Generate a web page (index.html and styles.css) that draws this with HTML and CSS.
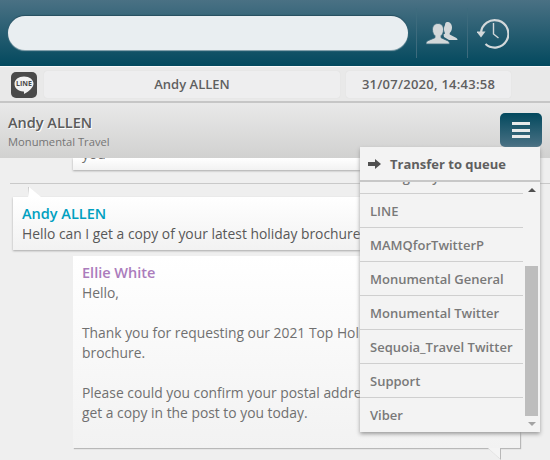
FILE: index.html
```html
<!DOCTYPE html>
<html lang="en">
<head>
<meta charset="UTF-8">
<title>Andy ALLEN</title>
<link rel="stylesheet" href="styles.css">
</head>
<body>
<div class="app">
    <header class="topbar">
        <div class="search"></div>
        <div class="topbar-btn topbar-btn-people">
            <svg width="32" height="24" viewBox="0 0 32 24">
                <path fill="#d3d8da" d="M21 1c3 0 5 2 5 5.500 0 2.500-1 4.500-2.300 5.500v1.500l6.300 3.300c1 .5 1.500 1.200 1.500 2.200h-8.500l-5-3-.5-2.500 1.500-1c-1.500-3.500-1.500-6 0-8.500C19 2 20 1 21 1z"/>
                <path fill="#d3d8da" stroke="#3a6a7c" stroke-width=".8" d="M12 2.500c3.500 0 5.500 2.500 5.500 6 0 3-1 5-2.500 6.200v2l6.500 3c1.200.6 2 1.500 2 3.300H0c0-1.800.8-2.700 2-3.300l7-3v-2C7.500 13.500 6.500 11.500 6.500 8.500c0-3.500 2-6 5.500-6z"/>
            </svg>
        </div>
        <div class="topbar-btn topbar-btn-history">
            <svg width="32" height="32" viewBox="0 0 32 32">
                <path fill="none" stroke="#d3d8da" stroke-width="2.200" d="M4 16A13.700 13.700 0 1 1 8.500 27"/>
                <path fill="#d3d8da" d="M-.5 14.500h9L4 20.500z"/>
                <path fill="none" stroke="#d3d8da" stroke-width="1.400" d="M16.500 6v11l5 4"/>
            </svg>
        </div>
    </header>

    <div class="infobar">
        <div class="channel-logo">
            <svg width="26" height="26" viewBox="0 0 26 26">
                <rect width="26" height="26" rx="5" fill="#4a4a4a"/>
                <path fill="#f2f2f2" d="M13 4.500c5.500 0 9.500 3.200 9.500 7.300 0 3.500-4.500 7.500-9 10-.6.300-.6-.4-.5-1.200 0-.6 0-1-.6-1C6.800 19 3.500 16 3.500 11.800c0-4.100 4-7.300 9.500-7.300z"/>
                <text class="channel-logo-text" x="13" y="14.400" text-anchor="middle">LINE</text>
            </svg>
        </div>
        <div class="infobar-field infobar-name">Andy ALLEN</div>
        <div class="infobar-field infobar-time">31/07/2020, 14:43:58</div>
    </div>

    <div class="contact">
        <div class="contact-text">
            <div class="contact-name">Andy ALLEN</div>
            <div class="contact-company">Monumental Travel</div>
        </div>
        <button class="menu-btn">
            <span></span><span></span><span></span>
        </button>
    </div>

    <div class="chat">
        <div class="bubble bubble-old"><div class="bubble-old-text">you</div></div>
        <div class="chat-divider"></div>
        <div class="bubble bubble-customer">
            <div class="bubble-name name-customer">Andy ALLEN</div>
            Hello can I get a copy of your latest holiday brochure please?
        </div>
        <div class="bubble bubble-agent">
            <div class="bubble-name name-agent">Ellie White</div>
            Hello,<br><br>
            Thank you for requesting our 2021 Top Holiday<br>brochure.<br><br>
            Please could you confirm your postal address so we can<br>get a copy in the post to you today.
        </div>
    </div>

    <div class="queue-menu">
        <div class="queue-title"><span class="queue-arrow"></span>Transfer to queue</div>
        <div class="queue-body">
            <ul class="queue-list">
                <li class="queue-cut"><div class="queue-cut-text">Emergency</div></li>
                <li>LINE</li>
                <li>MAMQforTwitterP</li>
                <li>Monumental General</li>
                <li>Monumental Twitter</li>
                <li>Sequoia_Travel Twitter</li>
                <li>Support</li>
                <li class="queue-last">Viber</li>
            </ul>
            <div class="queue-scroll">
                <div class="scroll-up"></div>
                <div class="scroll-track"><div class="scroll-thumb"></div></div>
                <div class="scroll-down"></div>
            </div>
        </div>
    </div>
</div>
</body>
</html>
```

FILE: styles.css
```css
html, body {
    margin: 0;
    padding: 0;
}
body {
    font-family: 'Open Sans', 'Noto Sans', sans-serif;
    background-color: #efefef;
}
.app {
    position: relative;
    width: 550px;
    height: 460px;
    overflow: hidden;
}
.topbar {
    display: flex;
    align-items: center;
    height: 66px;
    box-sizing: border-box;
    padding-left: 8px;
    background: linear-gradient(#4a7184, #03495e);
}
.search {
    width: 400px;
    height: 34px;
    margin-bottom: 1px;
    background-color: #e9eef1;
    border-radius: 17px;
    box-shadow: 0 -1px 1px #274f60, 0 1px 1px #8fa9b3;
}
.topbar-btn {
    display: flex;
    align-items: center;
    justify-content: center;
    height: 50px;
    border-left: 1px solid #3d6b7d;
}
.topbar-btn-people {
    width: 50px;
    margin-left: 8px;
}
.topbar-btn-history {
    width: 50px;
}
.infobar {
    display: flex;
    align-items: center;
    height: 37px;
    box-sizing: border-box;
    padding: 3px 0 2px 11px;
    background-color: #e9e9e9;
    border-top: 1px solid #fafafa;
    border-bottom: 2px solid #c6c6c6;
}
.channel-logo {
    display: flex;
    width: 26px;
    height: 26px;
    margin-right: 7px;
}
.channel-logo-text {
    font-size: 7px;
    font-weight: 700;
    fill: #4a4a4a;
}
.infobar-field {
    height: 27px;
    line-height: 27px;
    text-align: center;
    font-size: 13px;
    font-weight: 600;
    color: #5f5f5f;
    background-color: #eeeeef;
    border-radius: 3px;
    box-shadow: 0 0 1px #d4d4d4;
}
.infobar-name {
    width: 296px;
    margin-right: 6px;
}
.infobar-time {
    width: 165px;
    letter-spacing: .25px;
}
.contact {
    display: flex;
    justify-content: space-between;
    height: 55px;
    box-sizing: border-box;
    padding: 10px 8px 0 8px;
    background: linear-gradient(#e9e9e9, #d1d1d0);
}
.contact-text {
    padding-top: 1px;
}
.contact-name {
    font-size: 14.500px;
    line-height: 18px;
    font-weight: 600;
    color: #5b5b5b;
    text-shadow: 1px 1px 0 #ffffff;
}
.contact-company {
    margin-top: 2px;
    font-size: 11.200px;
    line-height: 16px;
    color: #757575;
}
.menu-btn {
    display: flex;
    flex-direction: column;
    align-items: center;
    justify-content: center;
    gap: 3.500px;
    width: 42px;
    height: 34px;
    margin: 0;
    padding: 0;
    border: none;
    border-radius: 5px;
    background: linear-gradient(#03495e, #4a7184);
}
.menu-btn span {
    display: block;
    width: 18px;
    height: 3px;
    background-color: #e8eaeb;
}
.chat {
    height: 302px;
    overflow: hidden;
    font-size: 13.850px;
    line-height: 20px;
    color: #707070;
}
.bubble {
    background: linear-gradient(#ffffff, #f2f2f2);
    box-shadow: 0 1px 2px #a8a8a8;
}
.bubble-old {
    width: 447px;
    height: 12px;
    margin-left: 73px;
    padding-left: 9px;
    box-sizing: border-box;
    overflow: hidden;
}
.bubble-old-text {
    margin-top: -14px;
}
.chat-divider {
    height: 1px;
    margin: 13px 0 0 10px;
    background-color: #c9c9c9;
}
.bubble-customer {
    position: relative;
    width: 520px;
    height: 53px;
    margin: 13px 0 0 13px;
    padding: 7px 9px 0;
    box-sizing: border-box;
    color: #585858;
}
.bubble-customer::before {
    content: "";
    position: absolute;
    left: 15px;
    top: -10px;
    border-bottom: 10px solid #ffffff;
    border-right: 12px solid transparent;
    border-left: 1px solid #c9c9c9;
}
.bubble-name {
    margin-bottom: 1px;
    font-size: 14.500px;
    line-height: 19px;
    font-weight: 600;
}
.name-customer {
    color: #00a0c0;
}
.name-agent {
    color: #ab7cbc;
}
.bubble-agent {
    position: relative;
    width: 447px;
    height: 192px;
    margin: 6px 0 0 73px;
    padding: 7px 9px 0;
    box-sizing: border-box;
    box-shadow: 1px 1px 1px #b8b8b8;
}
.bubble-agent::before, .bubble-agent::after {
    content: "";
    position: absolute;
}
.bubble-agent::before {
    right: 19px;
    bottom: -12px;
    border-left: 13px solid transparent;
    border-top: 12px solid #b8b8b8;
}
.bubble-agent::after {
    right: 20px;
    bottom: -11px;
    border-left: 12px solid transparent;
    border-top: 11px solid #f4f4f4;
}
.queue-menu {
    position: absolute;
    left: 360px;
    top: 147px;
    width: 180px;
    height: 285px;
    background-color: #f3f3f3;
    box-shadow: 0 2px 4px #9a9a9a;
}
.queue-title {
    display: flex;
    align-items: center;
    height: 35px;
    box-sizing: border-box;
    padding-left: 8px;
    font-size: 13px;
    font-weight: 700;
    color: #5f5f5f;
    border-bottom: 2px solid #c8c8c8;
}
.queue-arrow {
    position: relative;
    display: block;
    width: 8px;
    height: 4px;
    margin-right: 14px;
    background-color: #505050;
}
.queue-arrow::after {
    content: "";
    position: absolute;
    left: 7px;
    top: -3px;
    border-left: 6px solid #505050;
    border-top: 5px solid transparent;
    border-bottom: 5px solid transparent;
}
.queue-body {
    display: flex;
    height: 250px;
    overflow: hidden;
}
.queue-list {
    flex: none;
    width: 163px;
    margin: 0;
    padding: 0;
    list-style: none;
    overflow: hidden;
}
.queue-list li {
    height: 33px;
    line-height: 35px;
    padding-left: 10px;
    font-size: 13px;
    font-weight: 600;
    color: #797979;
    border-bottom: 1px solid #cfcfcf;
}
.queue-list .queue-cut {
    height: 11px;
    line-height: 20px;
    overflow: hidden;
}
.queue-cut-text {
    margin-top: -15px;
}
.queue-list .queue-last {
    border-bottom: none;
}
.queue-scroll {
    display: flex;
    flex-direction: column;
    align-items: center;
    width: 17px;
}
.scroll-up, .scroll-down {
    flex: none;
    width: 0;
    border-left: 4px solid transparent;
    border-right: 4px solid transparent;
    margin: 6px 0;
}
.scroll-up {
    border-bottom: 4px solid #505050;
}
.scroll-down {
    border-top: 4px solid #a3a3a3;
}
.scroll-track {
    flex: 1;
    width: 13px;
    display: flex;
    align-items: flex-end;
}
.scroll-thumb {
    width: 100%;
    height: 150px;
    background-color: #bdbdbd;
}
```
